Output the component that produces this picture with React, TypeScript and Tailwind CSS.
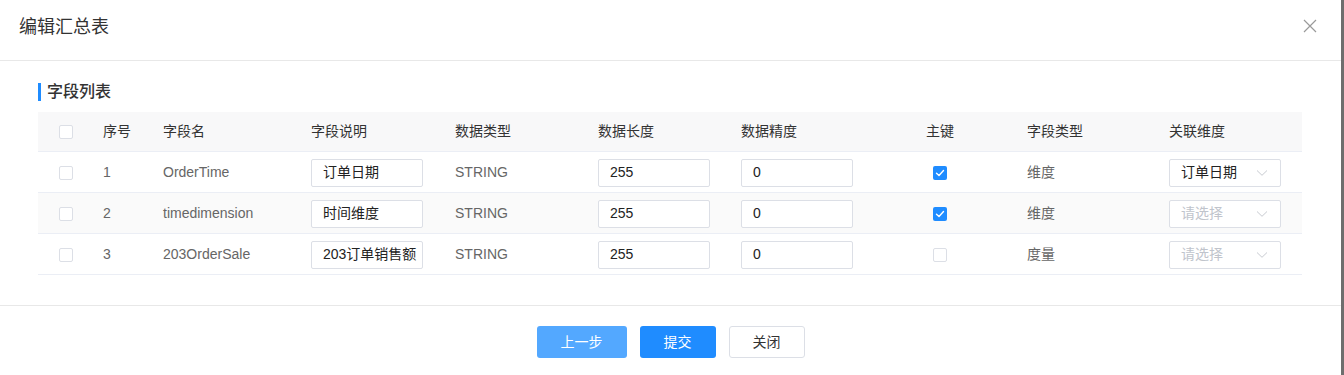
import React from "react";

const font = { fontFamily: '"Liberation Sans", "Noto Sans CJK SC", sans-serif' };

const cols = "grid grid-cols-[65px_60px_148px_144px_143px_143px_143px_143px_142px_133px]";

function Box({ checked }: { checked?: boolean }) {
  if (checked) {
    return (
      <div className="w-[14px] h-[14px] rounded-[2px] bg-[#1f8cff] flex items-center justify-center">
        <svg width="10" height="8" viewBox="0 0 10 8" fill="none">
          <path d="M1.5 4.2 L4 6.5 L8.5 1.5" stroke="white" strokeWidth="1.4" strokeLinecap="round" strokeLinejoin="round" />
        </svg>
      </div>
    );
  }
  return <div className="w-[14px] h-[14px] rounded-[2px] border border-[#dcdfe6] bg-white" />;
}

function Input({ value }: { value: string }) {
  return (
    <div className="w-[112px] h-[28px] border border-[#dcdfe6] rounded-[2px] bg-white flex items-center pl-[11px] overflow-hidden whitespace-nowrap text-[14px] text-[#222]">
      {value}
    </div>
  );
}

function Select({ value }: { value?: string }) {
  return (
    <div className="w-[112px] h-[28px] border border-[#dcdfe6] rounded-[2px] bg-white flex items-center justify-between pl-[11px] pr-[12px] text-[14px]">
      <span className={value ? "text-[#222]" : "text-[#c0c4cc]"}>{value ?? "请选择"}</span>
      <svg width="12" height="8" viewBox="0 0 12 8" fill="none">
        <path d="M1 1.5 L6 6.3 L11 1.5" stroke="#c8cbd1" strokeWidth="1" />
      </svg>
    </div>
  );
}

const rows = [
  { n: "1", name: "OrderTime", desc: "订单日期", pk: true, type: "维度", rel: "订单日期", bg: "bg-white" },
  { n: "2", name: "timedimension", desc: "时间维度", pk: true, type: "维度", rel: undefined, bg: "bg-[#fafafa]" },
  { n: "3", name: "203OrderSale", desc: "203订单销售额", pk: false, type: "度量", rel: undefined, bg: "bg-white" },
];

export default function App() {
  return (
    <div className="flex w-[1344px] h-[375px] overflow-hidden" style={font}>
      <div className="w-[1341px] h-[375px] bg-white flex flex-col">
        <div className="h-[61px] border-b border-[#e8e8e8] flex items-center justify-between pl-[19px] pr-[24px] shrink-0">
          <span className="text-[18px] text-[#333] -mt-[5px]">编辑汇总表</span>
          <svg width="14" height="14" viewBox="0 0 14 14" fill="none" className="-mt-[8px]">
            <path d="M1 1 L13 13 M13 1 L1 13" stroke="#9a9a9a" strokeWidth="1.2" />
          </svg>
        </div>
        <div className="px-[38px] pt-[22px] h-[244px] shrink-0">
          <div className="flex items-center h-[18px] mb-[11px]">
            <div className="w-[3px] h-[18px] bg-[#1f8cff]" />
            <span className="ml-[6px] text-[16px] font-medium text-[#333]">字段列表</span>
          </div>
          <div className="w-[1264px] text-[14px]">
            <div className={`${cols} h-[40px] bg-[#f8f8f9] border-b border-[#ebeef5] items-center text-[#333]`}>
              <div className="pl-[21px]"><Box /></div>
              <div>序号</div>
              <div>字段名</div>
              <div>字段说明</div>
              <div>数据类型</div>
              <div>数据长度</div>
              <div>数据精度</div>
              <div className="w-[112px] flex justify-center">主键</div>
              <div>字段类型</div>
              <div>关联维度</div>
            </div>
            {rows.map((r) => (
              <div key={r.n} className={`${cols} h-[41px] pt-[1px] ${r.bg} border-b border-[#ebeef5] items-center text-[#666]`}>
                <div className="pl-[21px]"><Box /></div>
                <div>{r.n}</div>
                <div>{r.name}</div>
                <div><Input value={r.desc} /></div>
                <div>STRING</div>
                <div><Input value="255" /></div>
                <div><Input value="0" /></div>
                <div className="w-[112px] flex justify-center"><Box checked={r.pk} /></div>
                <div>{r.type}</div>
                <div><Select value={r.rel} /></div>
              </div>
            ))}
          </div>
        </div>
        <div className="border-t border-[#e8e8e8] flex-1 flex justify-center pt-[20px] gap-[13px] text-[14px]">
          <button className="w-[90px] h-[32px] rounded-[3px] bg-[#53a8ff] text-white">上一步</button>
          <button className="w-[76px] h-[32px] rounded-[3px] bg-[#1f8cff] text-white">提交</button>
          <button className="w-[76px] h-[32px] rounded-[3px] border border-[#dcdfe6] bg-white text-[#333]">关闭</button>
        </div>
      </div>
      <div className="flex-1 bg-[#6e6e6e]" />
    </div>
  );
}
